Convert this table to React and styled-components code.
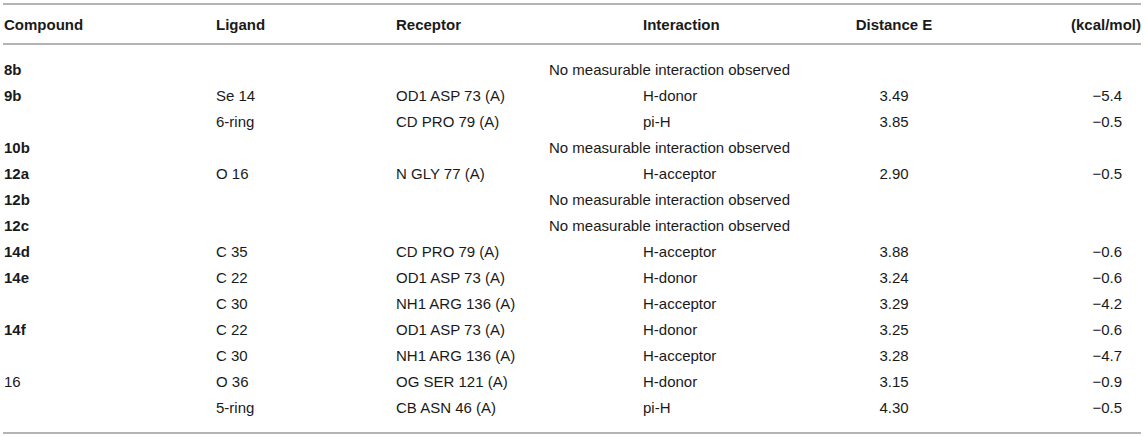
import React from "react";
import styled, { createGlobalStyle } from "styled-components";

const GlobalStyle = createGlobalStyle`
  body {
    margin: 0;
    background: #ffffff;
    font-family: "Liberation Sans", Arial, sans-serif;
    color: #1a1a1a;
  }
`;

const Wrapper = styled.div`
  padding: 3px 4px 0 3px;
`;

const Table = styled.div`
  border-top: 2px solid #b4b4b4;
  border-bottom: 2px solid #b4b4b4;
`;

const Grid = styled.div`
  display: grid;
  grid-template-columns: 213px 180px 247px 167px 168px 1fr;
  font-size: 15px;
`;

const HeadRow = styled(Grid)`
  height: 38px;
  align-items: center;
  border-bottom: 2px solid #b4b4b4;
`;

const Body = styled.div`
  padding: 11px 0 12px;
`;

const Row = styled(Grid)`
  height: 26px;
  align-items: center;
`;

const Cell = styled.div`
  padding-left: ${(props) => (props.first ? "1px" : "0")};
  text-align: ${(props) => props.align || "left"};
  padding-right: ${(props) => props.pr || 0}px;
  font-weight: ${(props) => (props.bold ? 700 : 400)};
  white-space: nowrap;
`;

const Note = styled.div`
  grid-column: 2 / -1;
  text-align: center;
  padding-right: 18px;
`;

const rows = [
  { c: "8b", note: true },
  { c: "9b", l: "Se 14", r: "OD1 ASP 73 (A)", i: "H-donor", d: "3.49", e: "−5.4" },
  { l: "6-ring", r: "CD PRO 79 (A)", i: "pi-H", d: "3.85", e: "−0.5" },
  { c: "10b", note: true },
  { c: "12a", l: "O 16", r: "N GLY 77 (A)", i: "H-acceptor", d: "2.90", e: "−0.5" },
  { c: "12b", note: true },
  { c: "12c", note: true },
  { c: "14d", l: "C 35", r: "CD PRO 79 (A)", i: "H-acceptor", d: "3.88", e: "−0.6" },
  { c: "14e", l: "C 22", r: "OD1 ASP 73 (A)", i: "H-donor", d: "3.24", e: "−0.6" },
  { l: "C 30", r: "NH1 ARG 136 (A)", i: "H-acceptor", d: "3.29", e: "−4.2" },
  { c: "14f", l: "C 22", r: "OD1 ASP 73 (A)", i: "H-donor", d: "3.25", e: "−0.6" },
  { l: "C 30", r: "NH1 ARG 136 (A)", i: "H-acceptor", d: "3.28", e: "−4.7" },
  { c: "16", plain: true, l: "O 36", r: "OG SER 121 (A)", i: "H-donor", d: "3.15", e: "−0.9" },
  { l: "5-ring", r: "CB ASN 46 (A)", i: "pi-H", d: "4.30", e: "−0.5" },
];

export default function App() {
  return (
    <Wrapper>
      <GlobalStyle />
      <Table>
        <HeadRow>
          <Cell first bold>Compound</Cell>
          <Cell bold>Ligand</Cell>
          <Cell bold>Receptor</Cell>
          <Cell bold>Interaction</Cell>
          <Cell bold align="center">Distance E</Cell>
          <Cell bold align="right">(kcal/mol)</Cell>
        </HeadRow>
        <Body>
          {rows.map((row, idx) => (
            <Row key={idx}>
              <Cell first bold={!row.plain}>{row.c || ""}</Cell>
              {row.note ? (
                <Note>No measurable interaction observed</Note>
              ) : (
                <>
                  <Cell>{row.l}</Cell>
                  <Cell>{row.r}</Cell>
                  <Cell>{row.i}</Cell>
                  <Cell align="center">{row.d}</Cell>
                  <Cell align="right" pr={19}>{row.e}</Cell>
                </>
              )}
            </Row>
          ))}
        </Body>
      </Table>
    </Wrapper>
  );
}
